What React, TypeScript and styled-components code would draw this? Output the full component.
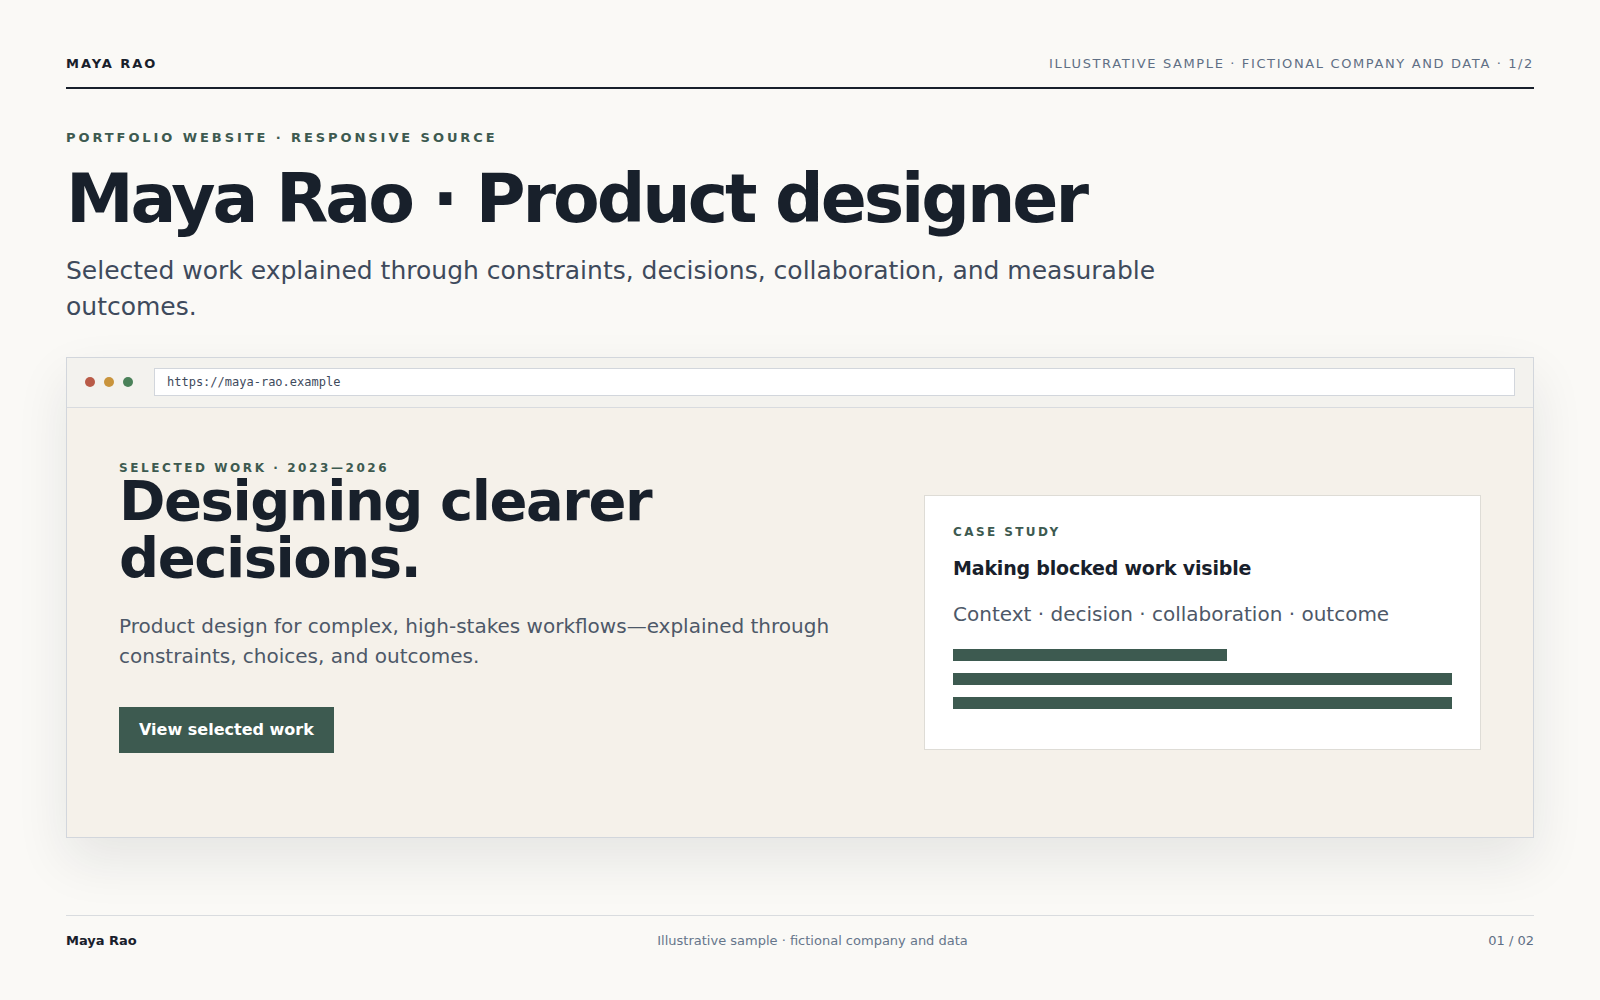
import React from "react";
import styled, { createGlobalStyle } from "styled-components";

const GlobalStyle = createGlobalStyle`
  html, body {
    margin: 0;
    padding: 0;
    background: #faf9f6;
  }
  body {
    font-family: "DejaVu Sans", "Noto Sans", sans-serif;
    color: #18202b;
    -webkit-font-smoothing: antialiased;
  }
  * { box-sizing: border-box; }
`;

const Page = styled.div`
  padding: 56px 66px 52px;
  min-height: 1000px;
`;

const TopBar = styled.header`
  display: flex;
  justify-content: space-between;
  align-items: center;
  padding-bottom: 15px;
  border-bottom: 2px solid #18202b;
`;

const Brand = styled.div`
  font-size: 13px;
  line-height: 16px;
  font-weight: 700;
  letter-spacing: 0.15em;
  color: #18202b;
`;

const Meta = styled.div`
  font-size: 13px;
  line-height: 16px;
  letter-spacing: 0.125em;
  color: #5f6f85;
`;

const Eyebrow = styled.div<{ $size?: number; $spacing?: string; $lh?: number }>`
  font-size: ${(p) => p.$size ?? 12}px;
  line-height: ${(p) => p.$lh ?? (p.$size ?? 12) + 4}px;
  font-weight: 700;
  letter-spacing: ${(p) => p.$spacing ?? "0.2em"};
  color: #3d5a50;
  text-transform: uppercase;
`;

const Intro = styled.section`
  margin-top: 40px;
`;

const Title = styled.h1`
  margin: 16px 0 0;
  font-size: 68px;
  line-height: 1.1;
  font-weight: 700;
  letter-spacing: -0.045em;
  color: #18202b;
`;

const Lede = styled.p`
  margin: 16px 0 0;
  max-width: 1180px;
  font-size: 25px;
  line-height: 36px;
  color: #3e4a5c;
`;

const BrowserFrame = styled.div`
  margin-top: 32px;
  border: 1px solid #d2d6dc;
  background: #f5f1ea;
  box-shadow: 0 22px 50px rgba(24, 32, 43, 0.09);
`;

const Toolbar = styled.div`
  display: flex;
  align-items: center;
  height: 50px;
  padding: 0 18px;
  background: #f3f2ee;
  border-bottom: 1px solid #d8dbdf;
`;

const Dots = styled.div`
  display: flex;
  gap: 9px;
  margin-right: 21px;
`;

const Dot = styled.span<{ $color: string }>`
  width: 10px;
  height: 10px;
  border-radius: 50%;
  background: ${(p) => p.$color};
`;

const UrlBar = styled.div`
  flex: 1;
  height: 28px;
  display: flex;
  align-items: center;
  padding-left: 12px;
  background: #ffffff;
  border: 1px solid #d2d6dc;
  font-family: "DejaVu Sans Mono", "Liberation Mono", monospace;
  font-size: 12px;
  color: #3e4a5c;
`;

const Hero = styled.div`
  display: grid;
  grid-template-columns: minmax(0, 1.345fr) minmax(0, 1fr);
  column-gap: 56px;
  align-items: center;
  min-height: 429px;
  padding: 52px;
`;

const HeroText = styled.div`
  align-self: start;
  padding-top: 2px;
`;

const HeroTitle = styled.h2`
  margin: -2px 0 0;
  font-size: 56px;
  line-height: 57px;
  font-weight: 700;
  letter-spacing: -0.026em;
  color: #18202b;
`;

const HeroCopy = styled.p`
  margin: 25px 0 0;
  font-size: 20px;
  line-height: 30px;
  color: #4d5868;
`;

const PrimaryButton = styled.button`
  display: block;
  margin-top: 36px;
  padding: 14px 20px;
  border: none;
  background: #3d5a50;
  color: #ffffff;
  font-family: "DejaVu Sans", sans-serif;
  font-size: 16px;
  line-height: 18.5px;
  font-weight: 700;
  cursor: pointer;
`;

const Card = styled.div`
  background: #ffffff;
  border: 1px solid #dedcd6;
  padding: 28px 28px 40px;
`;

const CardTitle = styled.div`
  margin-top: 16px;
  font-size: 19px;
  line-height: 24px;
  font-weight: 700;
  letter-spacing: -0.01em;
  color: #18202b;
`;

const CardMeta = styled.div`
  margin-top: 20px;
  font-size: 20px;
  line-height: 28px;
  color: #4d5868;
`;

const Bars = styled.div`
  margin-top: 21px;
  display: flex;
  flex-direction: column;
  gap: 12px;
`;

const Bar = styled.div`
  height: 12px;
  background: #3d5a50;
`;

const Footer = styled.footer`
  margin-top: 77px;
  padding-top: 17px;
  border-top: 1px solid #d9dcdf;
  display: flex;
  justify-content: space-between;
  align-items: center;
  font-size: 13px;
  line-height: 16px;
`;

const FooterName = styled.div`
  font-weight: 700;
  color: #18202b;
`;

const FooterNote = styled.div`
  color: #66768b;
`;

const FooterPage = styled.div`
  color: #5f6f85;
`;

const bars = [55, 100, 100];

export default function App() {
  return (
    <>
      <GlobalStyle />
      <Page>
        <TopBar>
          <Brand>MAYA RAO</Brand>
          <Meta>ILLUSTRATIVE SAMPLE · FICTIONAL COMPANY AND DATA · 1/2</Meta>
        </TopBar>

        <Intro>
          <Eyebrow $size={13} $spacing="0.225em">
            Portfolio website · Responsive source
          </Eyebrow>
          <Title>Maya Rao · Product designer</Title>
          <Lede>
            Selected work explained through constraints, decisions,
            collaboration, and measurable outcomes.
          </Lede>
        </Intro>

        <BrowserFrame>
          <Toolbar>
            <Dots>
              <Dot $color="#b95b48" />
              <Dot $color="#c9943c" />
              <Dot $color="#4a8159" />
            </Dots>
            <UrlBar>https://maya-rao.example</UrlBar>
          </Toolbar>
          <Hero>
            <HeroText>
              <Eyebrow $lh={12} $spacing="0.215em">
                Selected work · 2023—2026
              </Eyebrow>
              <HeroTitle>
                Designing clearer
                <br />
                decisions.
              </HeroTitle>
              <HeroCopy>
                Product design for complex, high-stakes workflows—explained
                through constraints, choices, and outcomes.
              </HeroCopy>
              <PrimaryButton>View selected work</PrimaryButton>
            </HeroText>
            <Card>
              <Eyebrow>Case study</Eyebrow>
              <CardTitle>Making blocked work visible</CardTitle>
              <CardMeta>Context · decision · collaboration · outcome</CardMeta>
              <Bars>
                {bars.map((w, i) => (
                  <Bar key={i} style={{ width: `${w}%` }} />
                ))}
              </Bars>
            </Card>
          </Hero>
        </BrowserFrame>

        <Footer>
          <FooterName>Maya Rao</FooterName>
          <FooterNote>Illustrative sample · fictional company and data</FooterNote>
          <FooterPage>01 / 02</FooterPage>
        </Footer>
      </Page>
    </>
  );
}
